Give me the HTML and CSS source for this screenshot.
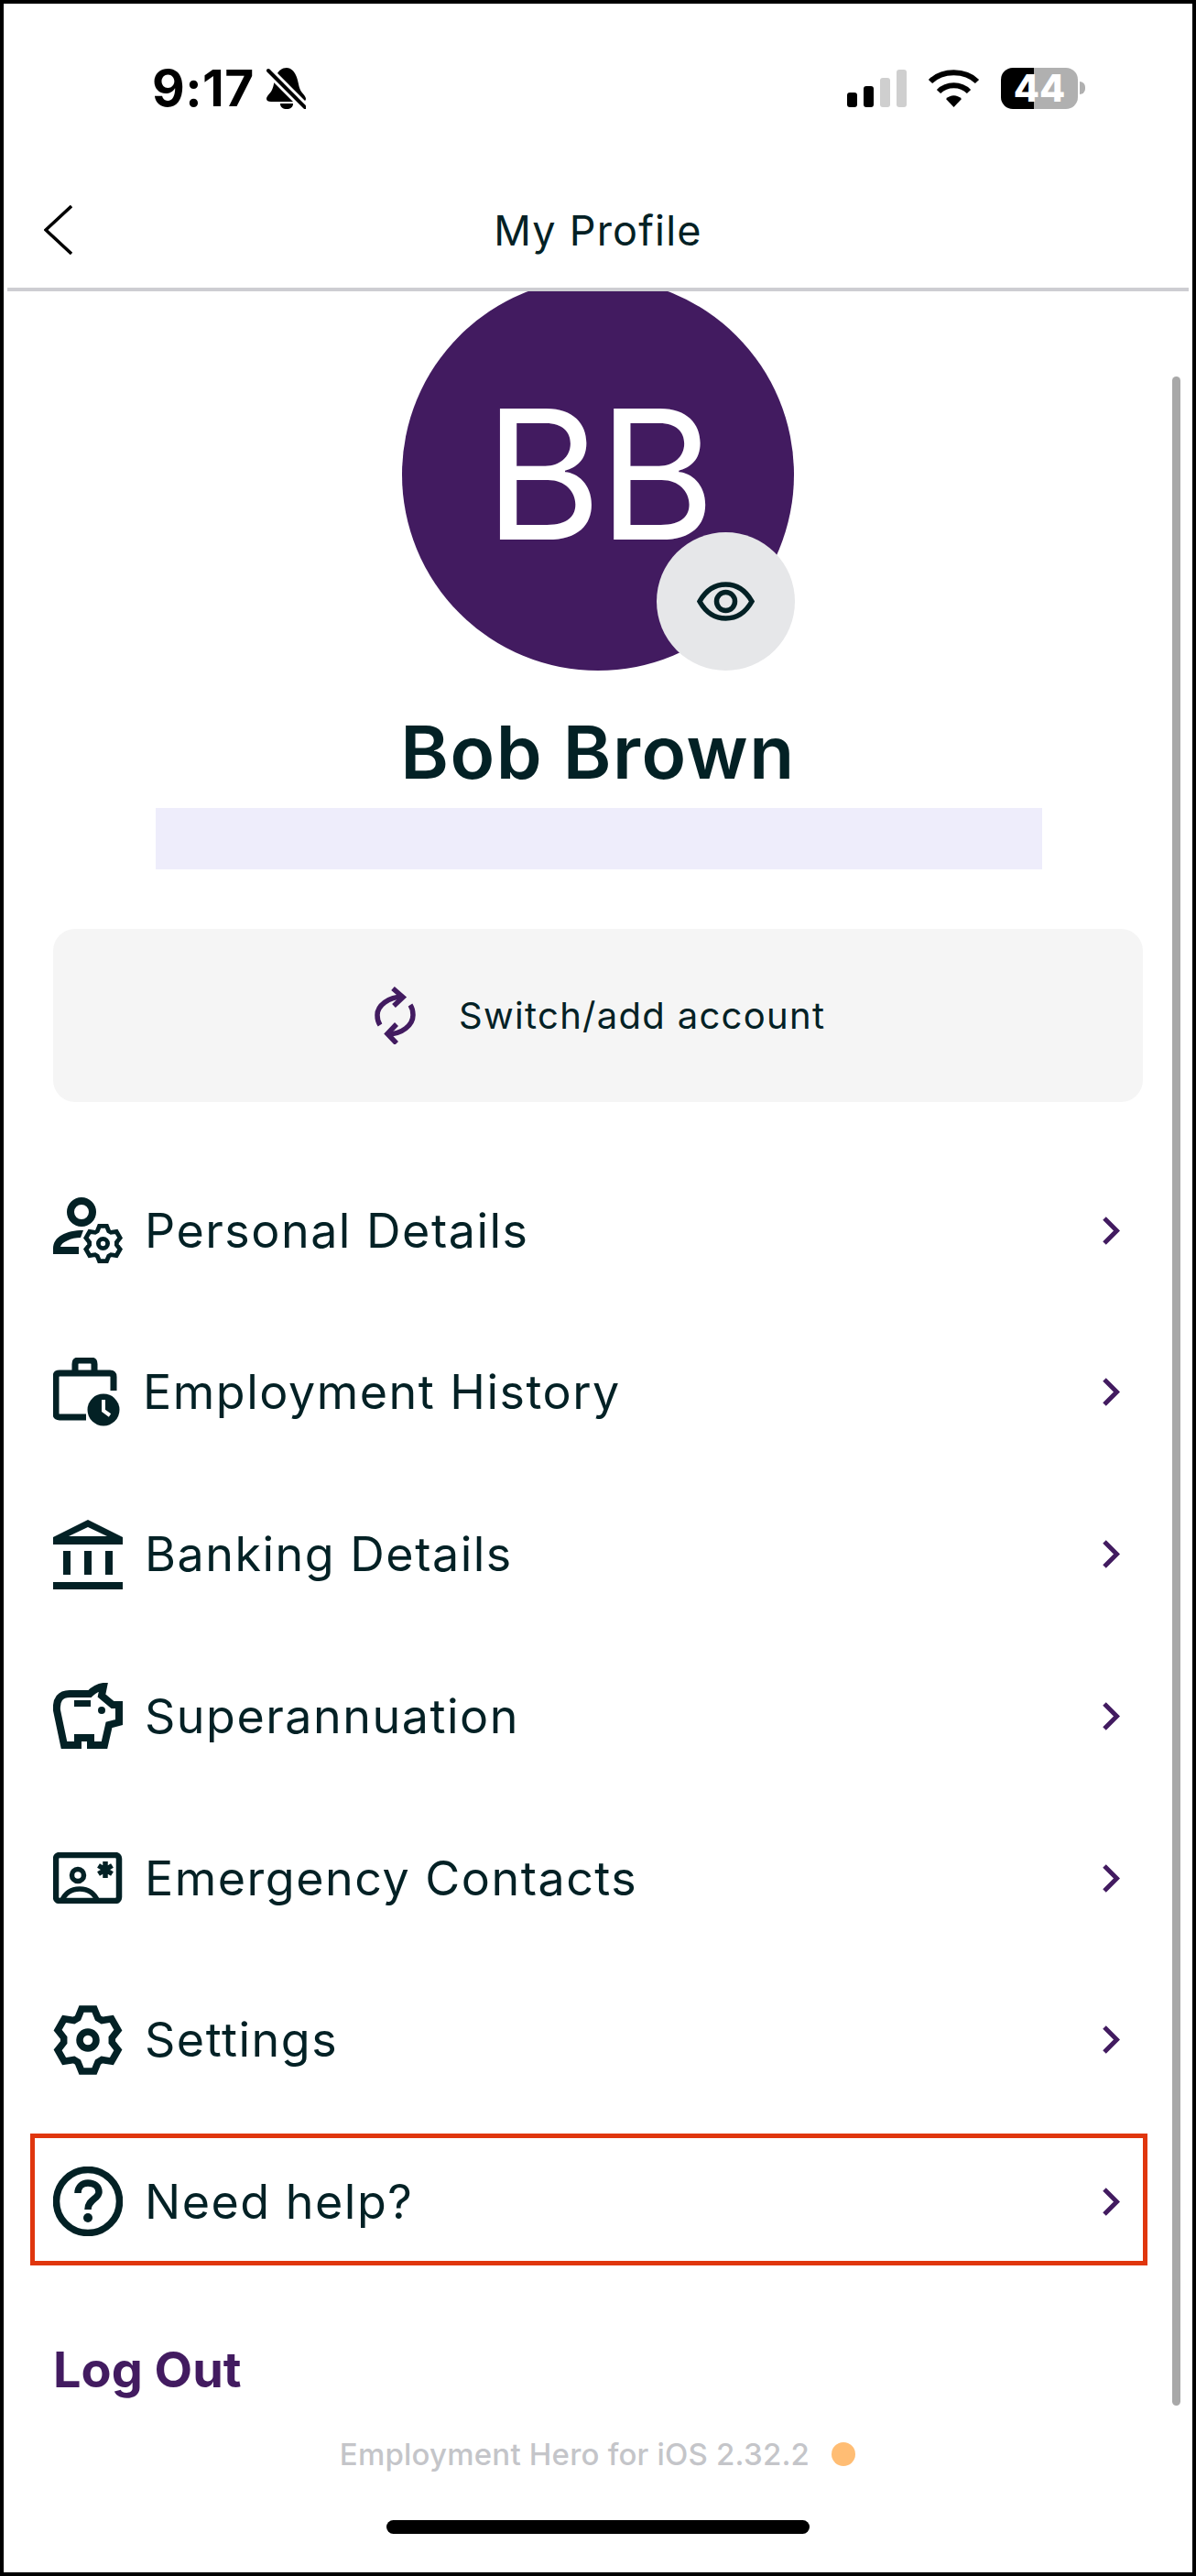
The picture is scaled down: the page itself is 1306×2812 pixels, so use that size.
FILE: index.html
```html
<!DOCTYPE html>
<html lang="en">
<head>
    <meta charset="UTF-8">
    <meta name="viewport" content="width=device-width, initial-scale=1.0">
    <title>My Profile</title>
    <link rel="stylesheet" href="styles.css">
</head>
<body>
    <svg class="defs" width="0" height="0">
        <symbol id="gear" viewBox="0 0 76 76">
            <path d="M27 14L31 4H45L49 14L53.3 16.5L63.9 14.9L70.9 27.1L64.3 35.5V40.5L70.9 48.9L63.9 61.1L53.3 59.5L49 62L45 72H31L27 62L22.7 59.5L12.1 61.1L5.1 48.9L11.7 40.5V35.5L5.1 27.1L12.1 14.9L22.7 16.5Z" fill="none" stroke="currentColor"/>
            <circle cx="38" cy="38" r="9" fill="none" stroke="currentColor"/>
        </symbol>
    </svg>

    <div class="phone">
        <div class="status-bar">
            <div class="status-left">
                <span class="time">9:17</span>
                <svg class="bell" viewBox="0 0 43 45" width="43" height="45">
                    <path d="M22 0C26 0 30 3 32 8C35 14 35 22 38 26C40 29 43 31 43 34C43 36 41 37 39 37H5C2 37 0 36 0 34C0 31 3 29 5 26C8 22 8 14 11 8C13 3 17 0 22 0Z"/>
                    <path d="M15 39H29C29 43 26 45 22 45C18 45 15 43 15 39Z"/>
                    <path d="M2 3L42 43" stroke="#fff" stroke-width="10"/>
                    <path d="M2 3L42 43" stroke="#000" stroke-width="4" stroke-linecap="round"/>
                </svg>
            </div>
            <div class="status-right">
                <div class="signal">
                    <span class="bar bar-1"></span>
                    <span class="bar bar-2"></span>
                    <span class="bar bar-3 off"></span>
                    <span class="bar bar-4 off"></span>
                </div>
                <svg class="wifi" viewBox="0 0 57 42" width="57" height="42">
                    <path d="M28.5 42L20 33C25 28 32 28 37 33Z"/>
                    <path d="M12 25C21 16 36 16 45 25" fill="none" stroke="#000" stroke-width="6"/>
                    <path d="M3 14C16 1 41 1 54 14" fill="none" stroke="#000" stroke-width="6"/>
                </svg>
                <div class="battery">
                    <div class="battery-body">44</div>
                    <span class="battery-tip"></span>
                </div>
            </div>
        </div>

        <div class="nav-bar">
            <svg class="back" viewBox="0 0 31 54" width="31" height="54">
                <path d="M30 1L2 27L30 53" fill="none" stroke="#000" stroke-width="3.5"/>
            </svg>
            <div class="nav-title">My Profile</div>
        </div>

        <div class="content">
            <div class="avatar">
                <span class="initials">BB</span>
                <div class="avatar-badge">
                    <svg viewBox="0 0 63 43" width="63" height="43">
                        <path d="M3 21.5C10 9 20 3 31.5 3C43 3 53 9 60 21.5C53 34 43 40 31.5 40C20 40 10 34 3 21.5Z" fill="none" stroke="#032125" stroke-width="5.5"/>
                        <circle cx="31.5" cy="21.5" r="10" fill="none" stroke="#032125" stroke-width="5.5"/>
                    </svg>
                </div>
            </div>
            <h1 class="name">Bob Brown</h1>
            <div class="redacted"></div>

            <div class="switch-btn">
                <svg viewBox="0 0 45 63" width="45" height="63">
                    <g fill="none" stroke="#421b60" stroke-width="5.5">
                        <path d="M31 11C15 11 3 21 3 31C3 35 4 39 6 42"/>
                        <path d="M20 2L31 11.5L21 21"/>
                        <path d="M14 52C30 52 42 42 42 31C42 27 41 23 39 20"/>
                        <path d="M24 41L14 51.5L24 62"/>
                    </g>
                </svg>
                <span>Switch/add account</span>
            </div>

            <div class="menu">
                <div class="row">
                    <svg class="row-icon" viewBox="0 0 76 72" width="76" height="72">
                        <circle cx="31" cy="16" r="12" fill="none" stroke="#032125" stroke-width="8"/>
                        <path d="M33 36C14 36 0 43 0 56V62H28V54H8C9 49 20 44 30 44Z" fill="#032125"/>
                        <use href="#gear" x="33" y="29" width="43" height="43" stroke-width="8.5"/>
                    </svg>
                    <span class="row-label">Personal Details</span>
                    <svg class="chevron" viewBox="0 0 19 31" width="19" height="31"><path d="M2 2L15.5 15.5L2 29" fill="none" stroke="#421b60" stroke-width="5"/></svg>
                </div>
                <div class="row">
                    <svg class="row-icon" viewBox="0 0 76 76" width="76" height="76">
                        <g fill="none" stroke="#032125" stroke-width="7">
                            <path d="M36 65H7Q3 65 3 61V21Q3 17 7 17H62Q66 17 66 21V36"/>
                            <path d="M24 17V7Q24 3 28 3H41Q45 3 45 7V17"/>
                        </g>
                        <circle cx="55" cy="57" r="17.5" fill="#032125"/>
                        <path d="M55 46V58L62 63" fill="none" stroke="#fff" stroke-width="4"/>
                    </svg>
                    <span class="row-label label-tight">Employment History</span>
                    <svg class="chevron" viewBox="0 0 19 31" width="19" height="31"><path d="M2 2L15.5 15.5L2 29" fill="none" stroke="#421b60" stroke-width="5"/></svg>
                </div>
                <div class="row">
                    <svg class="row-icon" viewBox="0 0 76 76" width="76" height="76">
                        <path fill-rule="evenodd" d="M38 0L76 19V27H0V19ZM38 8L17 18H59Z" fill="#032125"/>
                        <path d="M11 34H19V60H11ZM34 34H42V60H34ZM57 34H65V60H57ZM0 68H76V76H0Z" fill="#032125"/>
                    </svg>
                    <span class="row-label">Banking Details</span>
                    <svg class="chevron" viewBox="0 0 19 31" width="19" height="31"><path d="M2 2L15.5 15.5L2 29" fill="none" stroke="#421b60" stroke-width="5"/></svg>
                </div>
                <div class="row">
                    <svg class="row-icon" viewBox="0 0 76 72" width="76" height="72">
                        <path d="M12 68L4 30C3 18 8 12 18 12H40C44 8 48 5 55 4L53 14L65 24H72V43L61 46L56 68H41V60H27V68Z" fill="none" stroke="#032125" stroke-width="8"/>
                        <path d="M23 19H41V26H23Z" fill="#032125"/>
                        <circle cx="53" cy="30" r="4" fill="#032125"/>
                    </svg>
                    <span class="row-label">Superannuation</span>
                    <svg class="chevron" viewBox="0 0 19 31" width="19" height="31"><path d="M2 2L15.5 15.5L2 29" fill="none" stroke="#421b60" stroke-width="5"/></svg>
                </div>
                <div class="row">
                    <svg class="row-icon" viewBox="0 0 76 56" width="76" height="56">
                        <rect x="3" y="3" width="69" height="50" rx="4" fill="none" stroke="#032125" stroke-width="6.5"/>
                        <circle cx="27" cy="25" r="6.5" fill="none" stroke="#032125" stroke-width="5.5"/>
                        <path d="M9 54C13 44 21 40 29 40C37 40 45 44 49 54" fill="none" stroke="#032125" stroke-width="5.5"/>
                        <path d="M57 10V28M49.5 14.5L64.5 23.5M64.5 14.5L49.5 23.5" stroke="#032125" stroke-width="5.5"/>
                    </svg>
                    <span class="row-label">Emergency Contacts</span>
                    <svg class="chevron" viewBox="0 0 19 31" width="19" height="31"><path d="M2 2L15.5 15.5L2 29" fill="none" stroke="#421b60" stroke-width="5"/></svg>
                </div>
                <div class="row">
                    <svg class="row-icon row-gear" width="76" height="76"><use href="#gear" width="76" height="76" stroke-width="7.5"/></svg>
                    <span class="row-label">Settings</span>
                    <svg class="chevron" viewBox="0 0 19 31" width="19" height="31"><path d="M2 2L15.5 15.5L2 29" fill="none" stroke="#421b60" stroke-width="5"/></svg>
                </div>
                <div class="row row-highlight">
                    <svg class="row-icon" viewBox="0 0 76 76" width="76" height="76">
                        <circle cx="38" cy="38" r="34.5" fill="none" stroke="#032125" stroke-width="7.5"/>
                        <path d="M27 29C27 22 32 18 38 18C45 18 50 22 50 28C50 35 38 36 38 47" fill="none" stroke="#032125" stroke-width="7.5"/>
                        <circle cx="38" cy="56" r="5" fill="#032125"/>
                    </svg>
                    <span class="row-label">Need help?</span>
                    <svg class="chevron" viewBox="0 0 19 31" width="19" height="31"><path d="M2 2L15.5 15.5L2 29" fill="none" stroke="#421b60" stroke-width="5"/></svg>
                </div>
            </div>

            <div class="logout">Log Out</div>
            <div class="version">
                <span>Employment Hero for iOS 2.32.2</span>
                <span class="version-dot"></span>
            </div>
            <div class="home-bar"></div>
        </div>

        <div class="scrollbar"></div>
    </div>
</body>
</html>
```

FILE: styles.css
```css
body {
    margin: 0;
    background-color: #fff;
    font-family: Inter, "Liberation Sans", sans-serif;
    color: #032125;
}
.defs {
    position: absolute;
}
.phone {
    position: relative;
    box-sizing: border-box;
    width: 1306px;
    height: 2812px;
    border: 4px solid #000;
    background-color: #fff;
    display: flex;
    flex-direction: column;
    overflow: hidden;
}

/* status bar */
.status-bar {
    height: 184px;
    flex-shrink: 0;
    display: flex;
    align-items: center;
    justify-content: space-between;
    padding: 0 117px 0 162px;
}
.status-left {
    display: flex;
    align-items: center;
    gap: 13px;
}
.time {
    font-size: 55px;
    font-weight: 700;
    letter-spacing: 0.5px;
    color: #000;
}
.status-right {
    display: flex;
    align-items: center;
    gap: 23px;
}
.signal {
    display: flex;
    align-items: flex-end;
    gap: 7px;
    height: 41px;
}
.bar {
    width: 11px;
    border-radius: 3px;
    background-color: #000;
}
.bar.off {
    background-color: #cfcfcf;
}
.bar-1 { height: 16px; }
.bar-2 { height: 23px; }
.bar-3 { height: 32px; }
.bar-4 { height: 41px; }
.battery {
    display: flex;
    align-items: center;
    gap: 2px;
}
.battery-body {
    width: 84px;
    height: 45px;
    border-radius: 13px;
    background: linear-gradient(90deg, #000 43%, #b0b0b0 43%);
    color: #fff;
    font-size: 41px;
    font-weight: 800;
    line-height: 45px;
    text-align: center;
}
.battery-tip {
    width: 6px;
    height: 14px;
    border-radius: 0 7px 7px 0;
    background-color: #b0b0b0;
}

/* nav */
.nav-bar {
    position: relative;
    box-sizing: border-box;
    height: 130px;
    flex-shrink: 0;
    margin: 0 4px;
    padding-left: 40px;
    display: flex;
    align-items: center;
    border-bottom: 4px solid #cdcdd2;
}
.nav-title {
    position: absolute;
    left: 0;
    right: 0;
    text-align: center;
    font-size: 45px;
    letter-spacing: 1.2px;
}

/* profile */
.content {
    flex: 1;
    min-height: 0;
    display: flex;
    flex-direction: column;
    align-items: center;
    overflow: hidden;
}
.avatar {
    position: relative;
    flex-shrink: 0;
    width: 428px;
    height: 428px;
    margin-top: -14px;
    border-radius: 50%;
    background-color: #421b60;
    display: flex;
    align-items: center;
    justify-content: center;
}
.initials {
    color: #fff;
    font-size: 196px;
    font-weight: 400;
    letter-spacing: -4px;
    line-height: 1;
}
.avatar-badge {
    position: absolute;
    left: 278px;
    top: 277px;
    width: 151px;
    height: 151px;
    border-radius: 50%;
    background-color: #e6e7e9;
    display: flex;
    align-items: center;
    justify-content: center;
}
.name {
    margin: 39px 0 0;
    font-size: 80px;
    font-weight: 600;
    line-height: 100px;
    letter-spacing: 1.5px;
}
.redacted {
    flex-shrink: 0;
    width: 968px;
    height: 67px;
    margin: 11px 0 0 2px;
    background-color: #eeedfb;
}
.switch-btn {
    box-sizing: border-box;
    flex-shrink: 0;
    align-self: flex-start;
    width: 1190px;
    height: 189px;
    margin: 65px 0 0 54px;
    padding-left: 351px;
    border-radius: 24px;
    background-color: #f5f5f5;
    display: flex;
    align-items: center;
    gap: 47px;
    font-size: 40px;
    letter-spacing: 1.3px;
}

/* menu */
.menu {
    align-self: stretch;
    display: flex;
    flex-direction: column;
    gap: 32.8px;
    margin: 68px 49px 0 29px;
}
.row {
    box-sizing: border-box;
    height: 144px;
    padding: 0 25px 0 20px;
    border: 5px solid transparent;
    display: flex;
    align-items: center;
    gap: 24px;
}
.row-highlight {
    margin-top: -3px;
    margin-bottom: 3px;
    padding-top: 5px;
    border-color: #e0360e;
}
.row-icon {
    flex-shrink: 0;
}
.row-label {
    flex: 1;
    font-size: 52px;
    letter-spacing: 1.5px;
}
.label-tight {
    margin-left: -2px;
}
.chevron {
    flex-shrink: 0;
}
.logout {
    align-self: flex-start;
    margin: 78px 0 0 54px;
    font-size: 54px;
    font-weight: 700;
    color: #421b60;
}
.version {
    display: flex;
    align-items: center;
    gap: 24px;
    margin-top: 40px;
    margin-left: -1px;
    font-size: 33px;
    font-weight: 500;
    letter-spacing: 0.2px;
    color: #c4c5c9;
}
.version-dot {
    width: 26px;
    height: 26px;
    border-radius: 50%;
    background-color: #ffbd74;
}
.home-bar {
    width: 462px;
    height: 15px;
    margin-top: 52px;
    border-radius: 8px;
    background-color: #000;
}
.scrollbar {
    position: absolute;
    right: 13px;
    top: 407px;
    width: 9px;
    height: 2215px;
    border-radius: 5px;
    background-color: #a8a8a8;
}
```
